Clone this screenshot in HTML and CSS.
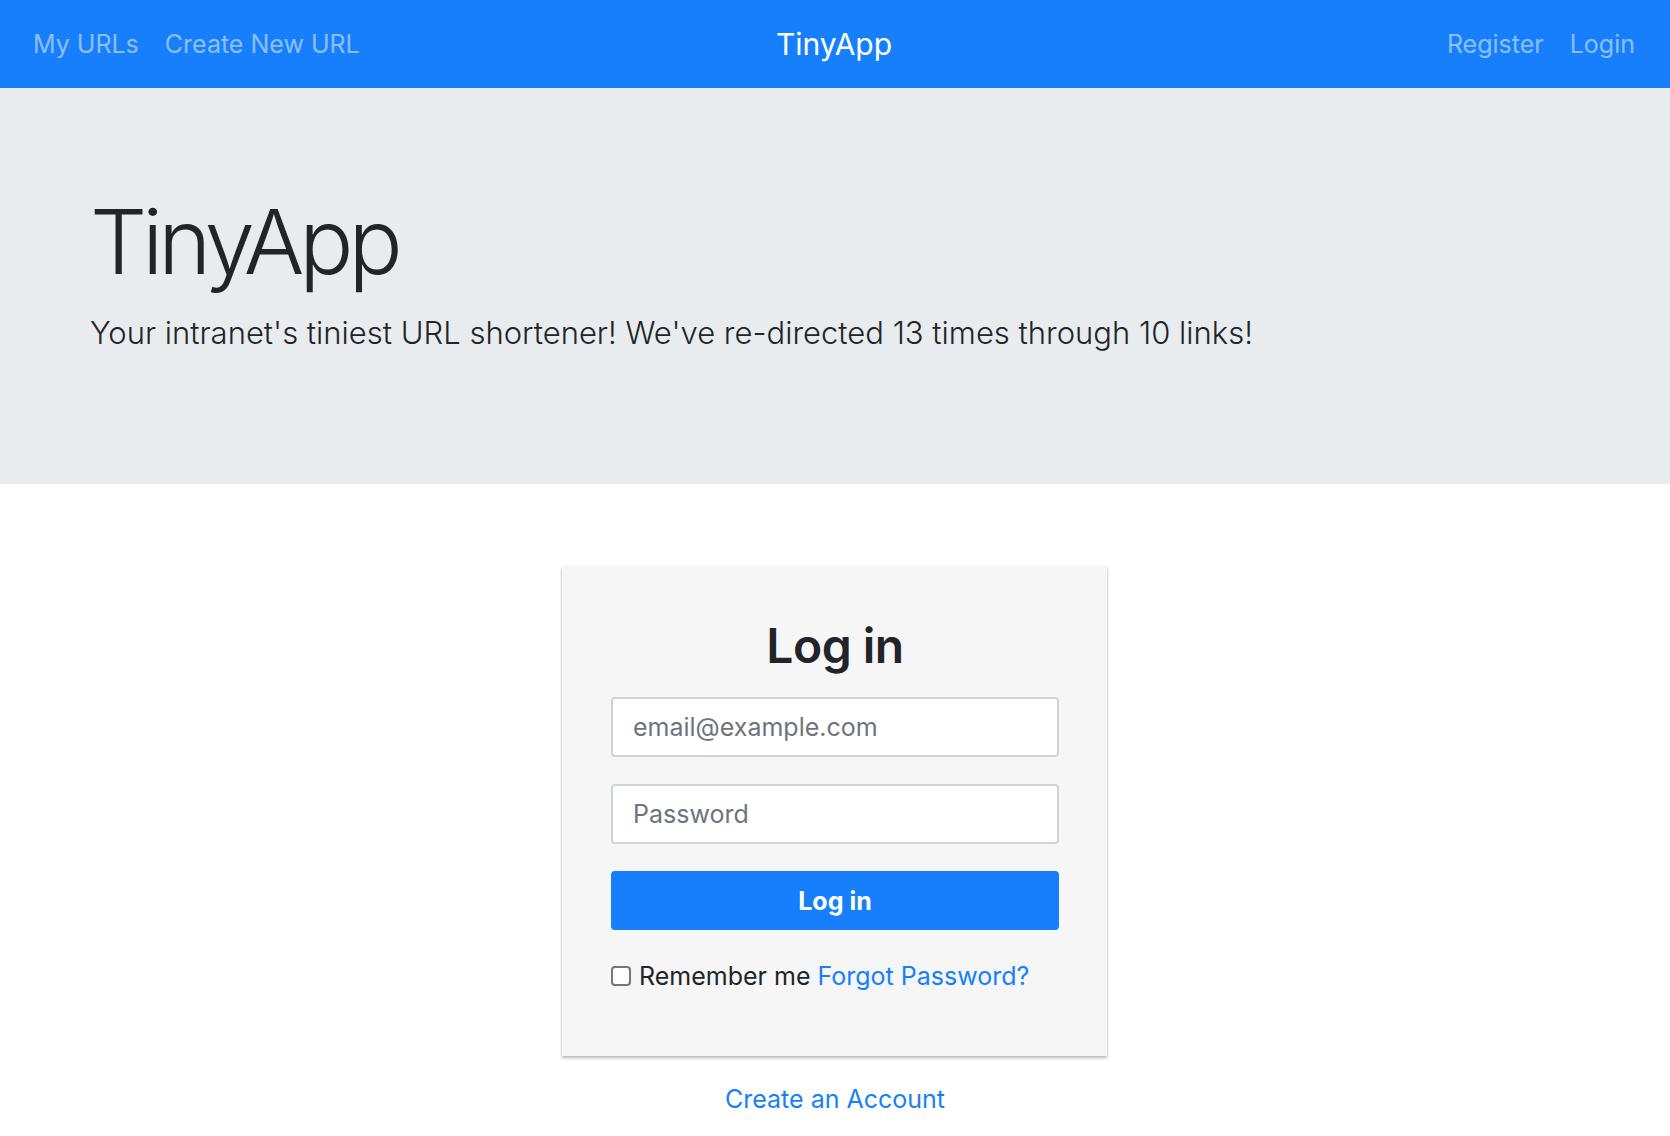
FILE: index.html
```html
<!DOCTYPE html>
<html lang="en">
<head>
<meta charset="utf-8">
<title>TinyApp</title>
<link rel="stylesheet" href="styles.css">
</head>
<body>
<nav class="navbar">
  <div class="nav-left">
    <a class="nav-link" href="#">My URLs</a>
    <a class="nav-link" href="#">Create New URL</a>
  </div>
  <a class="brand" href="#">TinyApp</a>
  <div class="nav-right">
    <a class="nav-link" href="#">Register</a>
    <a class="nav-link" href="#">Login</a>
  </div>
</nav>
<header class="jumbotron">
  <h1 class="display">TinyApp</h1>
  <p class="lead">Your intranet's tiniest URL shortener! We've re-directed 13 times through 10 links!</p>
</header>
<main class="main">
  <form class="card">
    <h2 class="card-title">Log in</h2>
    <input class="field" type="email" placeholder="email@example.com">
    <input class="field" type="password" placeholder="Password">
    <button class="btn" type="button">Log in</button>
    <div class="remember"><input class="check" type="checkbox" id="remember"><span class="remember-text"><label for="remember">Remember me</label> <a class="link" href="#">Forgot Password?</a></span></div>
  </form>
  <a class="link create" href="#">Create an Account</a>
</main>
</body>
</html>
```
FILE: styles.css
```css
* { box-sizing: border-box; }
html, body { margin: 0; padding: 0; }
body {
  font-family: Inter, "Noto Sans", sans-serif;
  color: #212529;
  background: #fff;
}
a { text-decoration: none; }

.navbar {
  height: 88px;
  background: #177ffb;
  display: grid;
  grid-template-columns: 1fr auto 1fr;
  align-items: center;
  padding: 0 22px 0 20px;
}
.nav-left, .nav-right { display: flex; align-items: center; }
.nav-right { justify-content: flex-end; }
.nav-link {
  color: rgba(255, 255, 255, 0.5);
  font-size: 25px;
  padding: 0 13px;
  line-height: 40px;
}
.brand {
  color: #fff;
  font-size: 30px;
  line-height: 40px;
}

.jumbotron {
  background: #e9ecef;
  height: 396px;
  padding: 100px 90px 0;
}
.display {
  margin: 0;
  font-size: 90px;
  font-weight: 300;
  line-height: 1.2;
  letter-spacing: -5px;
}
.lead {
  margin: 14px 0 0;
  font-size: 31px;
  font-weight: 300;
  line-height: 1.5;
}

.main {
  display: flex;
  flex-direction: column;
  align-items: center;
  padding-top: 82px;
}
.card {
  width: 545px;
  height: 490px;
  margin-right: 1px;
  background: #f6f6f6;
  box-shadow: 0 2px 3px rgba(0, 0, 0, 0.28), 0 0 1px rgba(0, 0, 0, 0.12);
  padding: 50px 48px 0 49px;
  display: flex;
  flex-direction: column;
}
.card-title {
  margin: 0 0 21px;
  text-align: center;
  font-size: 48px;
  font-weight: 600;
  letter-spacing: -0.5px;
  line-height: 60px;
}
.field {
  height: 60px;
  flex: none;
  border: 2px solid #ced4da;
  border-radius: 4px;
  background: #fff;
  padding: 0 20px;
  font-family: inherit;
  font-size: 25px;
  color: #495057;
  margin-bottom: 27px;
}
.field::placeholder { color: #6c757d; }
.btn {
  height: 59px;
  flex: none;
  border: 0;
  border-radius: 4px;
  background: #177ffb;
  color: #fff;
  font-family: inherit;
  font-size: 25px;
  font-weight: 700;
}
.remember {
  margin-top: 30px;
  display: flex;
  align-items: center;
  font-size: 25px;
  line-height: 32px;
}
.check {
  -webkit-appearance: none;
  appearance: none;
  flex: none;
  width: 20px;
  height: 20px;
  margin: 0 8px 0 0;
  border: 2px solid #767676;
  border-radius: 4px;
  background: #fff;
}
.link { color: #177ffb; }
.create {
  margin-top: 27px;
  font-size: 25px;
  line-height: 32px;
}
```
